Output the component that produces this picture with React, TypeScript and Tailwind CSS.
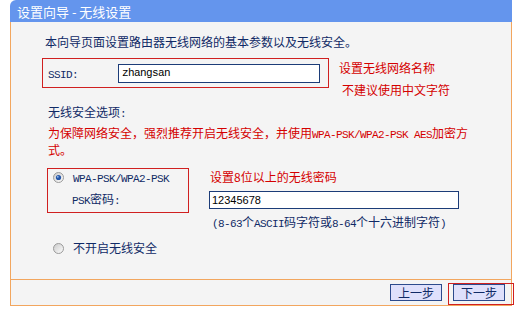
import React from "react";

const L = ({ children }: { children: React.ReactNode }) => (
  <span className="font-['Liberation_Mono',monospace] text-[11px] tracking-[-0.6px] leading-[0px]">{children}</span>
);

const Radio = ({ checked }: { checked?: boolean }) => (
  <svg width="11" height="11" viewBox="0 0 11 11" className="shrink-0">
    <defs>
      <linearGradient id={checked ? "rg1" : "rg2"} x1="0" y1="0" x2="1" y2="1">
        <stop offset="0" stopColor="#c8c8c8" />
        <stop offset="1" stopColor="#ffffff" />
      </linearGradient>
    </defs>
    <circle cx="5.5" cy="5.5" r="5" fill={`url(#${checked ? "rg1" : "rg2"})`} stroke="#9a9a9a" strokeWidth="1" />
    {checked && <circle cx="5.5" cy="5.5" r="2.6" fill="#2456a8" />}
    {checked && <circle cx="4.8" cy="4.8" r="0.9" fill="#9cc0f0" />}
  </svg>
);

export default function App() {
  return (
    <div className="w-[529px] h-[312px] bg-white overflow-hidden font-['Noto_Sans_CJK_SC',sans-serif] text-[12px] text-[#102a66]">
      <div className="ml-[10px] w-[502px]">
        <div className="h-[22px] bg-[#6495ed] rounded-tl-[6px] pl-[7px] flex items-center text-white text-[13px] leading-none whitespace-pre">
          {"设置向导 - 无线设置"}
        </div>
        <div className="h-[257px] border-x border-[#f2a65e] bg-[#f4f4f4] pt-[12px]">
          <div className="pl-[34px] leading-[16px]">本向导页面设置路由器无线网络的基本参数以及无线安全。</div>
          <div className="mt-[8px] ml-[31px] flex items-start">
            <div className="w-[287px] h-[30px] border border-[#d02020] flex items-center pl-[5px]">
              <div className="w-[70px] leading-[16px]"><L>SSID:</L></div>
              <div className="w-[202px] h-[19px] border border-[#1c3c78] bg-white flex items-center pl-[3px]">
                <span className="font-['Liberation_Mono',monospace] text-[11px] tracking-[-0.6px] text-black">zhangsan</span>
              </div>
            </div>
            <div className="ml-[10px] -mt-[1px] leading-[22px] text-[#d40000]">
              <div>设置无线网络名称</div>
              <div className="pl-[3px]">不建议使用中文字符</div>
            </div>
          </div>
          <div className="mt-[3px] ml-[37px] leading-[16px]">无线安全选项<L>:</L></div>
          <div className="mt-[4px] ml-[37px] leading-[17px] text-[#d40000]">
            <div>为保障网络安全，强烈推荐开启无线安全，并使用<L>WPA-PSK/WPA2-PSK AES</L>加密方</div>
            <div>式。</div>
          </div>
          <div className="mt-[10px] ml-[36px] flex items-start">
            <div className="w-[142px] h-[45px] border border-[#d02020] leading-[16px]">
              <div className="flex items-center pl-[5px] h-[16px]">
                <Radio checked />
                <span className="ml-[9px]"><L>WPA-PSK/WPA2-PSK</L></span>
              </div>
              <div className="mt-[6px] pl-[24px]"><L>PSK</L>密码<L>:</L></div>
            </div>
            <div className="ml-[20px] pt-[1px] leading-[16px]">
              <div className="pl-[1px] text-[#d40000]">设置8位以上的无线密码</div>
              <div className="mt-[6px] w-[250px] h-[18px] border border-[#1c3c78] bg-white flex items-center pl-[2px]">
                <span className="font-['Liberation_Sans',sans-serif] text-[11px] text-black">12345678</span>
              </div>
              <div className="mt-[5px] pl-[3px]"><L>(8-63</L>个<L>ASCII</L>码字符或<L>8-64</L>个十六进制字符<L>)</L></div>
            </div>
          </div>
          <div className="mt-[10px] ml-[42px] flex items-center leading-[16px]">
            <Radio />
            <span className="ml-[9px]">不开启无线安全</span>
          </div>
        </div>
        <div className="h-[27px] border border-[#f2a65e] bg-[#f4f4f4] flex justify-end items-start pt-[3px]">
          <button className="mt-[1px] w-[52px] h-[17px] border border-[#2c4a8c] bg-[#dfe0fb] text-[#102a66] text-[12px] leading-none flex items-center justify-center">
            上一步
          </button>
          <div className="ml-[6px] -mr-[3px] border border-[#d02020] pl-[4px] pr-[8px] pb-[3px]">
            <button className="w-[52px] h-[17px] border border-[#2c4a8c] bg-[#dfe0fb] text-[#102a66] text-[12px] leading-none flex items-center justify-center">
              下一步
            </button>
          </div>
        </div>
      </div>
    </div>
  );
}
